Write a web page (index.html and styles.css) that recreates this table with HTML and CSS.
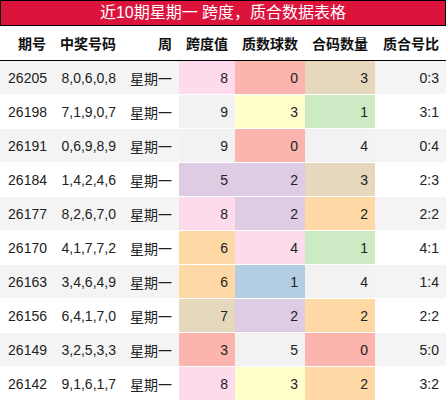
FILE: index.html
```html
<!DOCTYPE html>
<html>
<head>
<meta charset="utf-8">
<link rel="stylesheet" href="styles.css">
</head>
<body>
<div class="title">近10期星期一 跨度，质合数据表格</div>
<table class="grid">
<colgroup>
<col class="c1"><col class="c2"><col class="c3"><col class="c4"><col class="c5"><col class="c6"><col class="c7">
</colgroup>
<thead>
<tr><th>期号</th><th>中奖号码</th><th>周</th><th>跨度值</th><th>质数球数</th><th>合码数量</th><th>质合号比</th></tr>
</thead>
<tbody>
<tr class="odd"><td>26205</td><td>8,0,6,0,8</td><td>星期一</td><td class="pink">8</td><td class="salmon">0</td><td class="tan">3</td><td>0:3</td></tr>
<tr><td>26198</td><td>7,1,9,0,7</td><td>星期一</td><td class="gray">9</td><td class="yellow">3</td><td class="green">1</td><td>3:1</td></tr>
<tr class="odd"><td>26191</td><td>0,6,9,8,9</td><td>星期一</td><td class="gray">9</td><td class="salmon">0</td><td class="gray">4</td><td>0:4</td></tr>
<tr><td>26184</td><td>1,4,2,4,6</td><td>星期一</td><td class="lav">5</td><td class="lav">2</td><td class="tan">3</td><td>2:3</td></tr>
<tr class="odd"><td>26177</td><td>8,2,6,7,0</td><td>星期一</td><td class="pink">8</td><td class="lav">2</td><td class="orange">2</td><td>2:2</td></tr>
<tr><td>26170</td><td>4,1,7,7,2</td><td>星期一</td><td class="orange">6</td><td class="pink">4</td><td class="green">1</td><td>4:1</td></tr>
<tr class="odd"><td>26163</td><td>3,4,6,4,9</td><td>星期一</td><td class="orange">6</td><td class="blue">1</td><td class="gray">4</td><td>1:4</td></tr>
<tr><td>26156</td><td>6,4,1,7,0</td><td>星期一</td><td class="tan">7</td><td class="lav">2</td><td class="orange">2</td><td>2:2</td></tr>
<tr class="odd"><td>26149</td><td>3,2,5,3,3</td><td>星期一</td><td class="salmon">3</td><td class="gray">5</td><td class="salmon">0</td><td>5:0</td></tr>
<tr><td>26142</td><td>9,1,6,1,7</td><td>星期一</td><td class="pink">8</td><td class="yellow">3</td><td class="orange">2</td><td>3:2</td></tr>
</tbody>
</table>
</body>
</html>
```
FILE: styles.css
```css
html, body {
  margin: 0;
  padding: 0;
  background: #fff;
}
body {
  width: 446px;
  font-family: "Liberation Sans", "Noto Sans CJK SC", sans-serif;
}
.title {
  box-sizing: border-box;
  height: 26px;
  border: 1px solid #000;
  background: #dc143c;
  color: #fff;
  font-size: 16px;
  line-height: 24px;
  text-align: center;
}
.grid {
  width: 446px;
  border-collapse: collapse;
  table-layout: fixed;
  font-size: 14px;
}
.c1 { width: 53px; }
.c2 { width: 70px; }
.c3 { width: 56px; }
.c4 { width: 56px; }
.c5 { width: 70px; }
.c6 { width: 70px; }
.c7 { width: 71px; }
.grid th {
  height: 34px;
  padding: 0 7px 0 0;
  text-align: right;
  font-weight: bold;
  color: #111;
  border-bottom: 1px solid #000;
  background: #fff;
  white-space: nowrap;
}
.grid td {
  height: 33px;
  padding: 0 7px 0 0;
  text-align: right;
  color: #222;
  border-bottom: 1px solid #fff;
  white-space: nowrap;
}
.grid td:first-child {
  padding-right: 6px;
}
.grid tr.odd td { background: #f4f4f4; }
.grid tr td.pink { background: #fddaec; }
.grid tr td.salmon { background: #fbb4ae; }
.grid tr td.tan { background: #e5d8bd; }
.grid tr td.yellow { background: #ffffcc; }
.grid tr td.green { background: #ccebc5; }
.grid tr td.lav { background: #decbe4; }
.grid tr td.orange { background: #fed9a6; }
.grid tr td.blue { background: #b3cde3; }
.grid tr td.gray { background: #f2f2f2; }
```
